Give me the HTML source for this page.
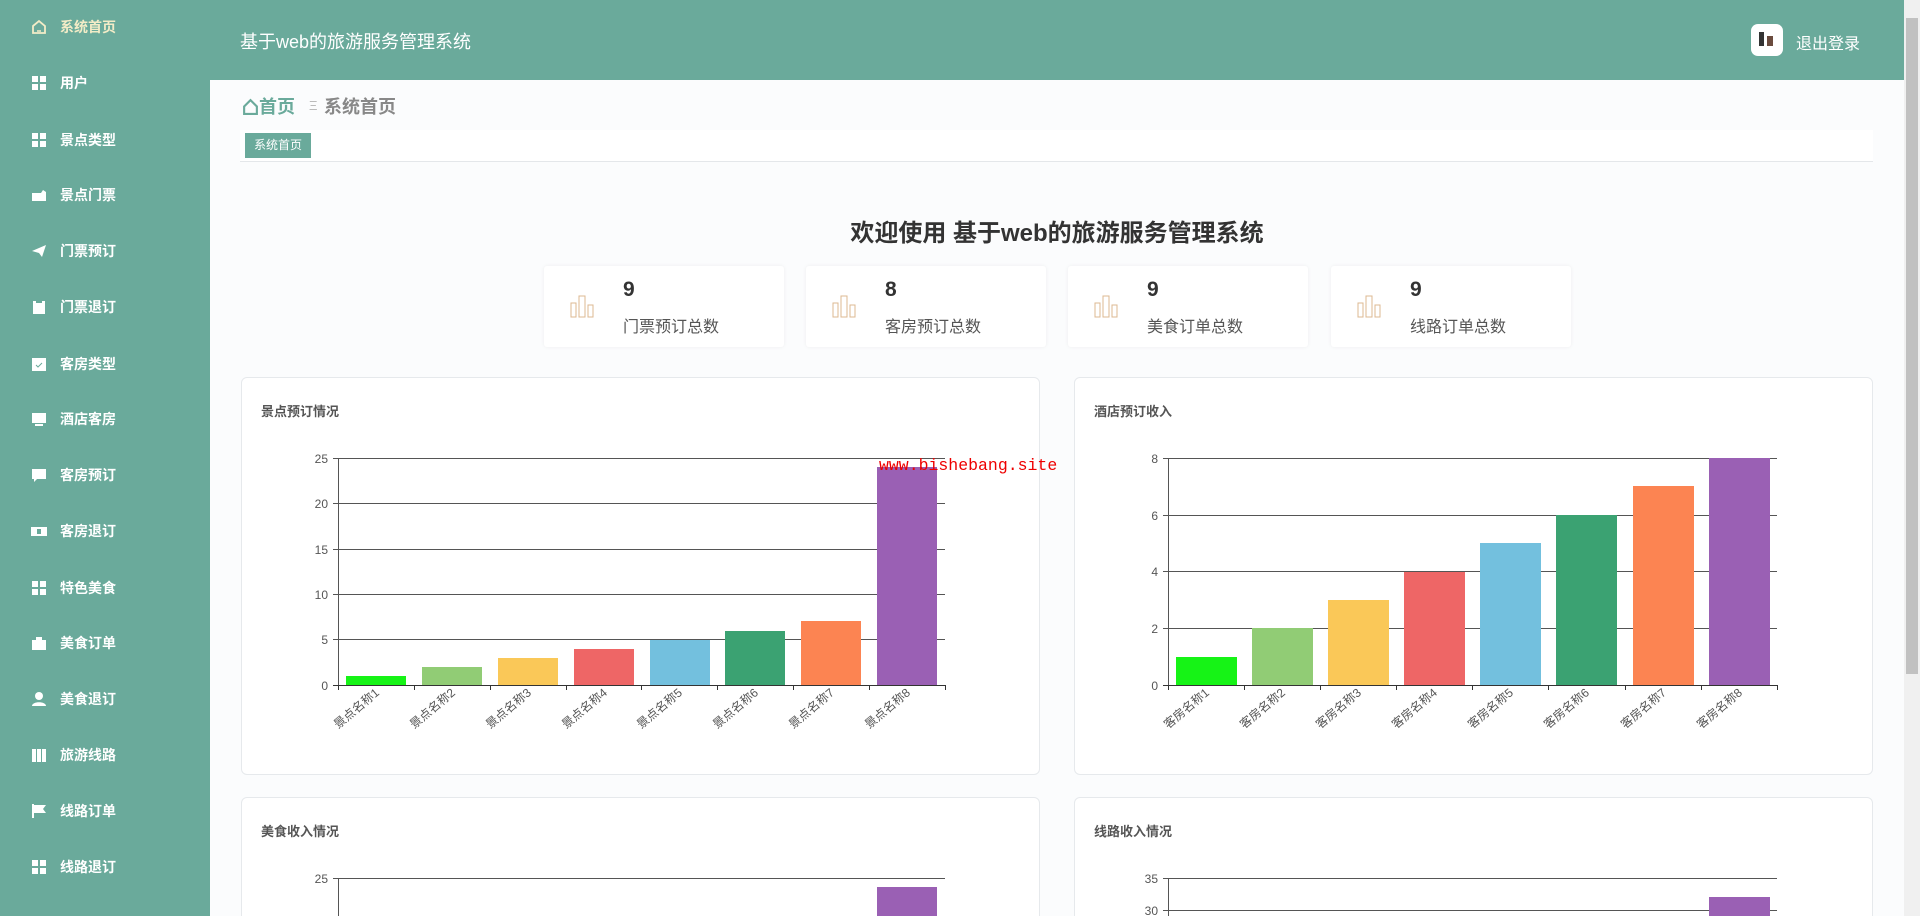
<!DOCTYPE html>
<html><head><meta charset="utf-8">
<style>
*{margin:0;padding:0;box-sizing:border-box}
html,body{width:1920px;height:916px;overflow:hidden;background:#fbfcfd;font-family:"Liberation Sans","Noto Sans CJK SC",sans-serif}
#wrap{position:relative;width:1920px;height:916px;overflow:hidden}
#side{position:absolute;left:0;top:0;width:210px;height:916px;background:#6aaa9b}
.mi{position:absolute;left:0;width:210px;height:30px;color:#fff;font-size:14px;font-weight:bold;line-height:30px}
.mi svg{position:absolute;left:31px;top:7px;width:16px;height:16px}
.mi span{position:absolute;left:60px;top:0}
#hdr{position:absolute;left:210px;top:0;width:1694px;height:80px;background:#6aaa9b}
#title{position:absolute;left:30px;top:28px;color:#fff;font-size:18px}
#av{position:absolute;left:1541px;top:24px;width:32px;height:32px;background:#fff;border-radius:7px}
#logout{position:absolute;left:1586px;top:30px;color:#fff;font-size:16px}
#sb{position:absolute;left:1904px;top:0;width:16px;height:916px;background:#f0f0f0}
#thumb{position:absolute;left:1906px;top:18px;width:12px;height:656px;background:#c1c1c1}
.bc{position:absolute;top:93px;font-size:18px;font-weight:bold;color:#888}
#tabs{position:absolute;left:240px;top:130px;width:1633px;height:32px;background:#fff;border-bottom:1px solid #e4e7ea}
#tab{position:absolute;left:5px;top:3px;width:66px;height:25px;background:#6aaa9b;color:#fff;font-size:12px;line-height:25px;text-align:center}
#wel{position:absolute;left:210px;width:1694px;top:213px;text-align:center;font-size:24px;font-weight:bold;color:#333}
.st{position:absolute;top:266px;width:240px;height:81px;background:#fff;box-shadow:0 0 4px rgba(0,0,0,.06);border-radius:3px}
.st svg{position:absolute;left:26px;top:28px}
.st .n{position:absolute;left:79px;top:12px;font-size:21px;font-weight:bold;color:#333}
.st .l{position:absolute;left:79px;top:47px;font-size:16px;color:#555}
.cd{position:absolute;width:799px;height:398px;background:#fff;border:1px solid #e6e9ec;border-radius:6px;overflow:hidden}
.cd .t{position:absolute;left:19px;top:23px;font-size:13px;font-weight:bold;color:#555}
.cd svg{position:absolute;left:0;top:0}
#wm{position:absolute;left:879px;top:456px;color:#e00;font-family:"Liberation Mono",monospace;font-size:16.5px}
</style></head><body><div id="wrap">
<div id="side">
<div class="mi" style="top:12px;color:#f3ecc7"><svg viewBox="0 0 16 16"><path d="M2 7 L8 2 L14 7 V14 H2Z" fill="none" stroke="#f3ecc7" stroke-width="1.8"/><path d="M6 12h4" stroke="#f3ecc7" stroke-width="1.5"/></svg><span>系统首页</span></div>
<div class="mi" style="top:68px"><svg viewBox="0 0 16 16" fill="#fff"><rect x="1" y="1" width="6" height="6"/><rect x="9" y="1" width="6" height="6"/><rect x="1" y="9" width="6" height="6"/><rect x="9" y="9" width="6" height="6"/></svg><span>用户</span></div>
<div class="mi" style="top:125px"><svg viewBox="0 0 16 16" fill="#fff"><rect x="1" y="1" width="6" height="6"/><rect x="9" y="1" width="6" height="6"/><rect x="1" y="9" width="6" height="6"/><rect x="9" y="9" width="6" height="6"/></svg><span>景点类型</span></div>
<div class="mi" style="top:180px"><svg viewBox="0 0 16 16" fill="#fff"><path d="M1 6h9l2-3 3 2v9H1z"/></svg><span>景点门票</span></div>
<div class="mi" style="top:236px"><svg viewBox="0 0 16 16" fill="#fff"><path d="M1 8 L15 2 L11 14 L8 10Z"/></svg><span>门票预订</span></div>
<div class="mi" style="top:292px"><svg viewBox="0 0 16 16" fill="#fff"><rect x="2" y="2" width="12" height="13"/><rect x="5" y="1" width="6" height="3" fill="#6aaa9b"/></svg><span>门票退订</span></div>
<div class="mi" style="top:349px"><svg viewBox="0 0 16 16" fill="#fff"><rect x="1" y="2" width="14" height="13"/><path d="M5 9l2 2 4-4" stroke="#6aaa9b" fill="none"/></svg><span>客房类型</span></div>
<div class="mi" style="top:404px"><svg viewBox="0 0 16 16" fill="#fff"><rect x="1" y="2" width="14" height="10"/><rect x="4" y="13" width="8" height="2"/></svg><span>酒店客房</span></div>
<div class="mi" style="top:460px"><svg viewBox="0 0 16 16" fill="#fff"><path d="M1 2h14v10H6l-3 3v-3H1z"/></svg><span>客房预订</span></div>
<div class="mi" style="top:516px"><svg viewBox="0 0 16 16" fill="#fff"><rect x="0" y="4" width="16" height="9"/><rect x="6" y="6" width="4" height="5" fill="#6aaa9b"/></svg><span>客房退订</span></div>
<div class="mi" style="top:573px"><svg viewBox="0 0 16 16" fill="#fff"><rect x="1" y="1" width="6" height="6"/><rect x="9" y="1" width="6" height="6"/><rect x="1" y="9" width="6" height="6"/><rect x="9" y="9" width="6" height="6"/></svg><span>特色美食</span></div>
<div class="mi" style="top:628px"><svg viewBox="0 0 16 16" fill="#fff"><rect x="1" y="5" width="14" height="10"/><rect x="5" y="2" width="6" height="3"/></svg><span>美食订单</span></div>
<div class="mi" style="top:684px"><svg viewBox="0 0 16 16" fill="#fff"><circle cx="8" cy="5" r="4"/><path d="M1 15c0-5 14-5 14 0z"/></svg><span>美食退订</span></div>
<div class="mi" style="top:740px"><svg viewBox="0 0 16 16" fill="#fff"><rect x="1" y="2" width="4" height="13"/><rect x="6" y="2" width="4" height="13"/><rect x="11" y="2" width="4" height="13"/></svg><span>旅游线路</span></div>
<div class="mi" style="top:796px"><svg viewBox="0 0 16 16" fill="#fff"><rect x="1" y="1" width="2" height="14"/><path d="M3 2h12l-3 4 3 4H3z"/></svg><span>线路订单</span></div>
<div class="mi" style="top:852px"><svg viewBox="0 0 16 16" fill="#fff"><rect x="1" y="1" width="6" height="6"/><rect x="9" y="1" width="6" height="6"/><rect x="1" y="9" width="6" height="6"/><rect x="9" y="9" width="6" height="6"/></svg><span>线路退订</span></div>
</div>
<div id="hdr"><div id="title">基于web的旅游服务管理系统</div>
<div id="av"><svg width="32" height="32"><rect x="8" y="8" width="5" height="14" fill="#333"/><rect x="16" y="12" width="6" height="10" fill="#6b4b3e"/></svg></div>
<div id="logout">退出登录</div></div>
<div id="sb"></div><div id="thumb"></div>
<div class="bc" style="left:242px;color:#6aaa9b"><svg width="17" height="17" viewBox="0 0 16 16" style="vertical-align:-2px"><path d="M2 8 L8 2 L14 8 V15 H2Z" fill="none" stroke="#6aaa9b" stroke-width="2"/></svg>首页</div>
<div class="bc" style="left:309px;color:#bbb;font-weight:normal;font-size:13px;top:98px">Ξ</div>
<div class="bc" style="left:324px">系统首页</div>
<div id="tabs"><div id="tab">系统首页</div></div>
<div id="wel">欢迎使用 基于web的旅游服务管理系统</div>
<div class="st" style="left:544px"><svg width="26" height="24"><g fill="none" stroke="#dcb892"><rect x="1" y="9" width="5" height="14"/><rect x="9" y="2" width="6" height="21"/><rect x="18" y="11" width="5" height="12"/></g></svg><div class="n">9</div><div class="l">门票预订总数</div></div>
<div class="st" style="left:806px"><svg width="26" height="24"><g fill="none" stroke="#dcb892"><rect x="1" y="9" width="5" height="14"/><rect x="9" y="2" width="6" height="21"/><rect x="18" y="11" width="5" height="12"/></g></svg><div class="n">8</div><div class="l">客房预订总数</div></div>
<div class="st" style="left:1068px"><svg width="26" height="24"><g fill="none" stroke="#dcb892"><rect x="1" y="9" width="5" height="14"/><rect x="9" y="2" width="6" height="21"/><rect x="18" y="11" width="5" height="12"/></g></svg><div class="n">9</div><div class="l">美食订单总数</div></div>
<div class="st" style="left:1331px"><svg width="26" height="24"><g fill="none" stroke="#dcb892"><rect x="1" y="9" width="5" height="14"/><rect x="9" y="2" width="6" height="21"/><rect x="18" y="11" width="5" height="12"/></g></svg><div class="n">9</div><div class="l">线路订单总数</div></div>

<div class="cd" style="left:241px;top:377px"><div class="t">景点预订情况</div>
<svg width="799" height="398" font-family="Liberation Sans,Noto Sans CJK SC,sans-serif" font-size="12" fill="#555">
<g stroke="#555" stroke-width="1"><line x1="91" y1="80.5" x2="703" y2="80.5"/><line x1="91" y1="125.5" x2="703" y2="125.5"/><line x1="91" y1="171.5" x2="703" y2="171.5"/><line x1="91" y1="216.5" x2="703" y2="216.5"/><line x1="91" y1="261.5" x2="703" y2="261.5"/><line x1="96.5" y1="80" x2="96.5" y2="307"/></g>
<rect x="104" y="298" width="60" height="9" fill="#16f316"/><rect x="180" y="289" width="60" height="18" fill="#91cc75"/><rect x="256" y="280" width="60" height="27" fill="#fac858"/><rect x="332" y="271" width="60" height="36" fill="#ee6666"/><rect x="408" y="262" width="60" height="45" fill="#73c0de"/><rect x="483" y="253" width="60" height="54" fill="#3ba272"/><rect x="559" y="243" width="60" height="64" fill="#fc8452"/><rect x="635" y="89" width="60" height="218" fill="#9a60b4"/>
<g stroke="#333"><line x1="91" y1="307.5" x2="703" y2="307.5"/><line x1="96.5" y1="307" x2="96.5" y2="312"/><line x1="172.5" y1="307" x2="172.5" y2="312"/><line x1="248.5" y1="307" x2="248.5" y2="312"/><line x1="324.5" y1="307" x2="324.5" y2="312"/><line x1="399.5" y1="307" x2="399.5" y2="312"/><line x1="475.5" y1="307" x2="475.5" y2="312"/><line x1="551.5" y1="307" x2="551.5" y2="312"/><line x1="627.5" y1="307" x2="627.5" y2="312"/><line x1="703.5" y1="307" x2="703.5" y2="312"/></g>
<g text-anchor="end"><text x="86" y="85">25</text><text x="86" y="130">20</text><text x="86" y="176">15</text><text x="86" y="221">10</text><text x="86" y="266">5</text><text x="86" y="312">0</text></g>
<g text-anchor="end"><text transform="translate(138,316) rotate(-40)">景点名称1</text><text transform="translate(214,316) rotate(-40)">景点名称2</text><text transform="translate(290,316) rotate(-40)">景点名称3</text><text transform="translate(366,316) rotate(-40)">景点名称4</text><text transform="translate(441,316) rotate(-40)">景点名称5</text><text transform="translate(517,316) rotate(-40)">景点名称6</text><text transform="translate(593,316) rotate(-40)">景点名称7</text><text transform="translate(669,316) rotate(-40)">景点名称8</text></g>
</svg></div>

<div class="cd" style="left:1074px;top:377px"><div class="t">酒店预订收入</div>
<svg width="799" height="398" font-family="Liberation Sans,Noto Sans CJK SC,sans-serif" font-size="12" fill="#555">
<g stroke="#555"><line x1="88" y1="80.5" x2="702" y2="80.5"/><line x1="88" y1="137.5" x2="702" y2="137.5"/><line x1="88" y1="193.5" x2="702" y2="193.5"/><line x1="88" y1="250.5" x2="702" y2="250.5"/><line x1="93.5" y1="80" x2="93.5" y2="307"/></g>
<rect x="101" y="279" width="61" height="28" fill="#16f316"/><rect x="177" y="250" width="61" height="57" fill="#91cc75"/><rect x="253" y="222" width="61" height="85" fill="#fac858"/><rect x="329" y="194" width="61" height="113" fill="#ee6666"/><rect x="405" y="165" width="61" height="142" fill="#73c0de"/><rect x="481" y="137" width="61" height="170" fill="#3ba272"/><rect x="558" y="108" width="61" height="199" fill="#fc8452"/><rect x="634" y="80" width="61" height="227" fill="#9a60b4"/>
<g stroke="#333"><line x1="88" y1="307.5" x2="702" y2="307.5"/><line x1="93.5" y1="307" x2="93.5" y2="312"/><line x1="169.5" y1="307" x2="169.5" y2="312"/><line x1="245.5" y1="307" x2="245.5" y2="312"/><line x1="321.5" y1="307" x2="321.5" y2="312"/><line x1="397.5" y1="307" x2="397.5" y2="312"/><line x1="473.5" y1="307" x2="473.5" y2="312"/><line x1="550.5" y1="307" x2="550.5" y2="312"/><line x1="626.5" y1="307" x2="626.5" y2="312"/><line x1="702.5" y1="307" x2="702.5" y2="312"/></g>
<g text-anchor="end"><text x="83" y="85">8</text><text x="83" y="142">6</text><text x="83" y="198">4</text><text x="83" y="255">2</text><text x="83" y="312">0</text></g>
<g text-anchor="end"><text transform="translate(135,316) rotate(-40)">客房名称1</text><text transform="translate(211,316) rotate(-40)">客房名称2</text><text transform="translate(287,316) rotate(-40)">客房名称3</text><text transform="translate(363,316) rotate(-40)">客房名称4</text><text transform="translate(439,316) rotate(-40)">客房名称5</text><text transform="translate(515,316) rotate(-40)">客房名称6</text><text transform="translate(592,316) rotate(-40)">客房名称7</text><text transform="translate(668,316) rotate(-40)">客房名称8</text></g>
</svg></div>

<div class="cd" style="left:241px;top:797px;height:130px"><div class="t">美食收入情况</div>
<svg width="799" height="130" font-family="Liberation Sans,Noto Sans CJK SC,sans-serif" font-size="12" fill="#555">
<g stroke="#555"><line x1="91" y1="80.5" x2="703" y2="80.5"/><line x1="96.5" y1="80" x2="96.5" y2="130"/></g>
<rect x="635" y="89" width="60" height="50" fill="#9a60b4"/>
<text x="86" y="85" text-anchor="end">25</text></svg></div>

<div class="cd" style="left:1074px;top:797px;height:130px"><div class="t">线路收入情况</div>
<svg width="799" height="130" font-family="Liberation Sans,Noto Sans CJK SC,sans-serif" font-size="12" fill="#555">
<g stroke="#555"><line x1="88" y1="80.5" x2="702" y2="80.5"/><line x1="88" y1="112.5" x2="702" y2="112.5"/><line x1="93.5" y1="80" x2="93.5" y2="130"/></g>
<rect x="634" y="99" width="61" height="40" fill="#9a60b4"/>
<text x="83" y="85" text-anchor="end">35</text><text x="83" y="117" text-anchor="end">30</text></svg></div>

<div id="wm">www.bishebang.site</div>
</div></body></html>
